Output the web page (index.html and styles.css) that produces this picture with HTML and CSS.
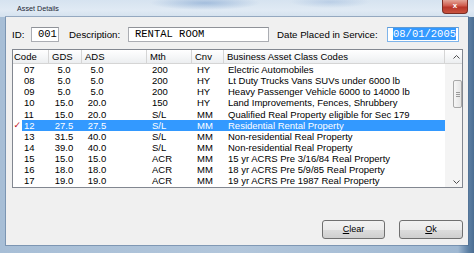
FILE: index.html
```html
<!DOCTYPE html>
<html lang="en">
<head>
  <meta charset="UTF-8" />
  <title>Asset Details</title>
  <link rel="stylesheet" href="styles.css">
</head>
<body>
  <div class="window">
    <div class="titlebar">
      <span class="title">Asset Details</span>
      <span class="close">x</span>
    </div>

    <div class="content">
      <div class="fields">
        <span class="lbl lbl-id">ID:</span>
        <span class="box box-id">001</span>
        <span class="lbl lbl-desc">Description:</span>
        <span class="box box-desc">RENTAL ROOM</span>
        <span class="lbl lbl-date">Date Placed in Service:</span>
        <span class="box box-date"><span class="sel">08/01/2005</span></span>
      </div>

      <div class="grid">
        <div class="grid-main">
          <div class="grid-head">
            <span>Code</span>
            <span>GDS</span>
            <span>ADS</span>
            <span>Mth</span>
            <span>Cnv</span>
            <span>Business Asset Class Codes</span>
          </div>

          <div class="row"><span class="mark"></span><span class="c-code">07</span><span class="c-gds">5.0</span><span class="c-ads">5.0</span><span class="c-mth">200</span><span class="c-cnv">HY</span><span class="c-desc">Electric Automobiles</span></div>
          <div class="row"><span class="mark"></span><span class="c-code">08</span><span class="c-gds">5.0</span><span class="c-ads">5.0</span><span class="c-mth">200</span><span class="c-cnv">HY</span><span class="c-desc">Lt Duty Trucks Vans SUVs under 6000 lb</span></div>
          <div class="row"><span class="mark"></span><span class="c-code">09</span><span class="c-gds">5.0</span><span class="c-ads">5.0</span><span class="c-mth">200</span><span class="c-cnv">HY</span><span class="c-desc">Heavy Passenger Vehicle 6000 to 14000 lb</span></div>
          <div class="row"><span class="mark"></span><span class="c-code">10</span><span class="c-gds">15.0</span><span class="c-ads">20.0</span><span class="c-mth">150</span><span class="c-cnv">HY</span><span class="c-desc">Land Improvements, Fences, Shrubbery</span></div>
          <div class="row"><span class="mark"></span><span class="c-code">11</span><span class="c-gds">15.0</span><span class="c-ads">20.0</span><span class="c-mth">S/L</span><span class="c-cnv">MM</span><span class="c-desc">Qualified Real Property eligible for Sec 179</span></div>
          <div class="row selected"><span class="mark">✓</span><span class="c-code">12</span><span class="c-gds">27.5</span><span class="c-ads">27.5</span><span class="c-mth">S/L</span><span class="c-cnv">MM</span><span class="c-desc">Residential Rental Property</span></div>
          <div class="row"><span class="mark"></span><span class="c-code">13</span><span class="c-gds">31.5</span><span class="c-ads">40.0</span><span class="c-mth">S/L</span><span class="c-cnv">MM</span><span class="c-desc">Non-residential Real Property</span></div>
          <div class="row"><span class="mark"></span><span class="c-code">14</span><span class="c-gds">39.0</span><span class="c-ads">40.0</span><span class="c-mth">S/L</span><span class="c-cnv">MM</span><span class="c-desc">Non-residential Real Property</span></div>
          <div class="row"><span class="mark"></span><span class="c-code">15</span><span class="c-gds">15.0</span><span class="c-ads">15.0</span><span class="c-mth">ACR</span><span class="c-cnv">MM</span><span class="c-desc">15 yr ACRS Pre 3/16/84 Real Property</span></div>
          <div class="row"><span class="mark"></span><span class="c-code">16</span><span class="c-gds">18.0</span><span class="c-ads">18.0</span><span class="c-mth">ACR</span><span class="c-cnv">MM</span><span class="c-desc">18 yr ACRS Pre 5/9/85 Real Property</span></div>
          <div class="row"><span class="mark"></span><span class="c-code">17</span><span class="c-gds">19.0</span><span class="c-ads">19.0</span><span class="c-mth">ACR</span><span class="c-cnv">MM</span><span class="c-desc">19 yr ACRS Pre 1987 Real Property</span></div>
        </div>

        <div class="scrollbar">
          <div class="sb-up">
            <svg width="7" height="4" viewBox="0 0 7 4"><path d="M0.5 3.5 L3.5 0.5 L6.5 3.5" fill="none" stroke="#4d4d4d" stroke-width="1"/></svg>
          </div>
          <div class="sb-track">
            <div class="sb-thumb"><span></span><span></span><span></span></div>
          </div>
          <div class="sb-down">
            <svg width="7" height="4" viewBox="0 0 7 4"><path d="M0.5 0.5 L3.5 3.5 L6.5 0.5" fill="none" stroke="#4d4d4d" stroke-width="1"/></svg>
          </div>
        </div>
      </div>

      <div class="buttons">
        <button class="btn btn-clear"><u>C</u>lear</button>
        <button class="btn btn-ok"><u>O</u>k</button>
      </div>
    </div>
  </div>
</body>
</html>
```

FILE: styles.css
```css
body {
  margin: 0;
  padding: 0;
  width: 474px;
  height: 253px;
  overflow: hidden;
  font-family: 'Liberation Sans', Arial, sans-serif;
  color: black;
}

.window {
  width: 474px;
  height: 253px;
  display: flex;
  flex-direction: column;
  background: linear-gradient(to right, #a7bed6 0, #b2c6db 50%, #9fb8d2 458px, #5f82a6 468px, #4b6e92 474px);
}

/* aero title bar */
.titlebar {
  height: 17px;
  flex: none;
  display: flex;
  align-items: flex-start;
  background:
    radial-gradient(ellipse 55px 7px at 205px 3px, rgba(110, 150, 200, 0.5), transparent),
    radial-gradient(ellipse 40px 6px at 330px 2px, rgba(130, 165, 210, 0.35), transparent),
    linear-gradient(to bottom, #d6e3f0, #e0eaf4 60%, #d4e1ee);
}

.title {
  font-size: 7.2px;
  line-height: 17px;
  padding-left: 17px;
  color: #1b2633;
}

.close {
  margin-left: auto;
  margin-right: 6px;
  width: 26px;
  height: 14px;
  box-sizing: border-box;
  border: 1px solid #7a2d25;
  border-top: none;
  border-radius: 0 0 4px 4px;
  background: linear-gradient(to bottom, #e3a598, #cf5a4c 45%, #b8352a 55%, #c9543f);
  color: white;
  font-size: 8px;
  font-weight: bold;
  text-align: center;
  line-height: 12px;
}

.content {
  flex: 1;
  margin: 0 6px 8px 6px;
  padding: 10px 5px 6px 6px;
  background-color: #f0f0f0;
  display: flex;
  flex-direction: column;
  box-shadow: 0 0 0 1px rgba(70, 100, 135, 0.45);
}

/* top input row */
.fields {
  display: flex;
  align-items: center;
  height: 15px;
  font-size: 9.7px;
}

.lbl {
  flex: none;
}

.lbl-id {
  width: 19px;
}

.lbl-desc {
  margin-left: 10px;
  width: 59px;
}

.lbl-date {
  margin-left: 8px;
  width: 110px;
}

.box {
  flex: none;
  box-sizing: border-box;
  height: 15px;
  border: 1px solid #abadb3;
  border-top-color: #8f9298;
  background-color: white;
  font-family: 'Liberation Mono', 'Courier New', monospace;
  font-size: 10.5px;
  line-height: 13px;
  padding-left: 6px;
  white-space: nowrap;
}

.box-id {
  width: 28px;
}

.box-desc {
  width: 141px;
}

.box-date {
  width: 72px;
  padding-left: 5px;
  border-color: #7eb4ea;
  border-top-color: #5f9bd6;
}

.sel {
  background-color: #3399ff;
  color: white;
  display: inline-block;
  line-height: 12px;
}

/* list view */
.grid {
  margin-top: 7px;
  height: 139px;
  box-sizing: border-box;
  border: 1px solid #828790;
  background-color: white;
  display: flex;
}

.grid-main {
  width: 432px;
  flex: none;
}

.grid-head {
  display: grid;
  grid-template-columns: 36px 33px 65px 45px 32px 1fr;
  height: 14px;
  box-sizing: border-box;
  border-bottom: 1px solid #d5d5d5;
  background: linear-gradient(to bottom, #ffffff, #f6f7f8 50%, #eceef0);
  font-size: 9.5px;
  line-height: 13px;
}

.grid-head span {
  border-right: 1px solid #d5d5d5;
  padding-left: 3px;
  white-space: nowrap;
  overflow: hidden;
}

.grid-head span:first-child {
  padding-left: 1px;
}

.row {
  display: grid;
  grid-template-columns: 9px 27px 33px 65px 45px 32px 1fr;
  height: 11.15px;
  line-height: 11.15px;
  font-size: 9.5px;
  white-space: nowrap;
}

.row span {
  overflow: hidden;
}

.mark {
  color: #c0101b;
  font-family: 'DejaVu Sans', sans-serif;
  font-size: 9px;
  font-weight: bold;
  text-align: right;
  padding-right: 1px;
}

.c-code {
  padding-left: 2px;
}

.c-gds {
  text-align: center;
  padding-right: 3px;
}

.c-ads {
  text-align: center;
  padding-right: 35px;
}

.c-mth,
.c-cnv {
  padding-left: 5px;
}

.c-desc {
  padding-left: 4px;
}

.row.selected span:not(.mark) {
  background-color: #3399ff;
  color: white;
}

/* vertical scrollbar */
.scrollbar {
  flex: 1;
  display: flex;
  flex-direction: column;
  background-color: #f4f4f4;
}

.sb-up {
  height: 14px;
  box-sizing: border-box;
  border-bottom: 1px solid #d5d5d5;
  background: linear-gradient(to bottom, #ffffff, #f6f7f8 50%, #eceef0);
  display: flex;
  align-items: center;
  justify-content: center;
  padding-left: 6px;
}

.sb-track {
  flex: 1;
  padding-top: 16px;
}

.sb-thumb {
  margin-left: 8px;
  width: 9px;
  height: 28px;
  box-sizing: border-box;
  border: 1px solid #a8a8a8;
  border-radius: 2px;
  background: linear-gradient(to right, #f6f6f6, #e4e4e4);
  display: flex;
  flex-direction: column;
  justify-content: center;
  align-items: center;
  gap: 1px;
}

.sb-thumb span {
  width: 4px;
  height: 1px;
  background-color: #9a9a9a;
}

.sb-down {
  height: 10px;
  display: flex;
  align-items: center;
  justify-content: center;
  padding-left: 6px;
}

/* dialog buttons */
.buttons {
  margin-top: auto;
  display: flex;
  justify-content: flex-end;
  gap: 14px;
}

.btn {
  height: 19px;
  box-sizing: border-box;
  border: 1px solid #707070;
  border-radius: 3px;
  background: linear-gradient(to bottom, #f2f2f2, #ebebeb 50%, #dddddd 51%, #cfcfcf);
  font-family: 'Liberation Sans', Arial, sans-serif;
  font-size: 9px;
  line-height: 17px;
  padding: 0;
  color: black;
}

.btn-clear {
  width: 63px;
}

.btn-ok {
  width: 64px;
}
```
